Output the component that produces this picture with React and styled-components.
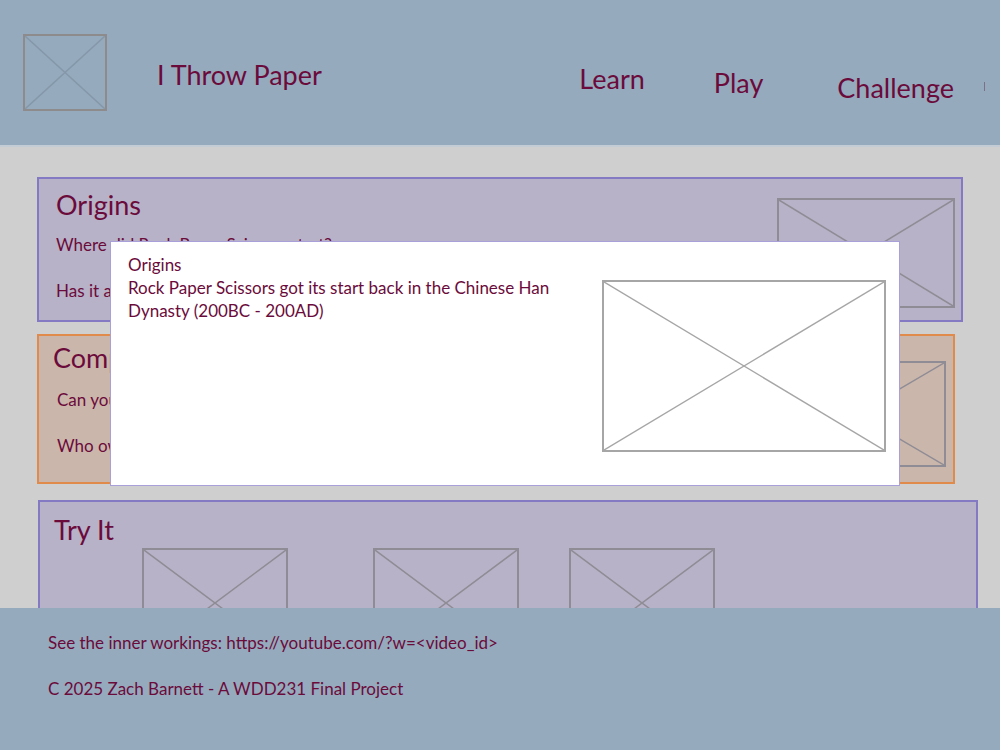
import styled, { createGlobalStyle } from "styled-components";

/* global */

const GlobalStyle = createGlobalStyle`
  html, body {
    margin: 0;
    padding: 0;
  }
  body {
    font-family: Lato, "Liberation Sans", sans-serif;
    color: #6b0b3b;
    background: #d0cfd0;
  }
  * {
    box-sizing: border-box;
  }
  p, h1, h2 {
    margin: 0;
    font-weight: 400;
  }
`;

/* styled components */

const Page = styled.div`
  position: relative;
  width: 1000px;
  height: 750px;
  overflow: hidden;
  display: flex;
  flex-direction: column;
`;

const Header = styled.header`
  flex: none;
  height: 147px;
  background: #95aabd;
  border-bottom: 2px solid #c3ccd5;
  display: flex;
  align-items: flex-start;
`;

const Title = styled.h1`
  margin: 59px 0 0 50px;
  font-size: 27px;
  line-height: 32px;
  white-space: nowrap;
`;

const Nav = styled.nav`
  margin-left: auto;
  display: flex;
  align-items: flex-start;
`;

const NavLink = styled.a`
  margin-top: ${(p) => p.$top}px;
  margin-left: ${(p) => p.$gap}px;
  font-size: 27px;
  line-height: 32px;
  color: inherit;
  text-decoration: none;
  white-space: nowrap;
`;

const Caret = styled.span`
  width: 1px;
  height: 9px;
  margin: 82px 15px 0 30px;
  background: #7d6f86;
`;

const Main = styled.main`
  flex: 1;
  overflow: hidden;
  padding-top: 30px;
  display: flex;
  flex-direction: column;
`;

const Section = styled.section`
  flex: none;
  margin: ${(p) => p.$mt}px 0 0 ${(p) => p.$left}px;
  width: ${(p) => p.$width}px;
  height: ${(p) => p.$height}px;
  border: 2px solid ${(p) => (p.$tone === "tan" ? "#e08b4c" : "#8479c3")};
  background: ${(p) => (p.$tone === "tan" ? "#cbb6ab" : "#b7b2c7")};
  display: flex;
  justify-content: space-between;
  align-items: flex-start;
`;

const SectionBody = styled.div`
  padding: ${(p) => p.$pad};
`;

const Heading = styled.h2`
  font-size: 27px;
  line-height: 32px;
  white-space: nowrap;
`;

const Question = styled.p`
  margin-top: ${(p) => p.$mt}px;
  margin-left: ${(p) => p.$indent || 0}px;
  font-size: 17px;
  line-height: 20px;
  white-space: nowrap;
`;

const Gallery = styled.div`
  display: flex;
  align-items: flex-start;
  margin-top: 2px;
`;

const Frame = styled.div`
  flex: none;
  width: ${(p) => p.$w}px;
  height: ${(p) => p.$h}px;
  margin: ${(p) => p.$m || "0"};
  border: 2px solid ${(p) => p.$edge};
  svg {
    display: block;
    width: 100%;
    height: 100%;
  }
`;

const Footer = styled.footer`
  flex: none;
  height: 142px;
  background: #95aabd;
  padding: 24px 0 0 48px;
`;

const FooterLine = styled.p`
  font-size: 17px;
  line-height: 22px;
  margin-bottom: 24px;
  white-space: nowrap;
`;

const Modal = styled.div`
  position: absolute;
  left: 110px;
  top: 241px;
  width: 790px;
  height: 245px;
  background: #ffffff;
  border: 1px solid #a99fd9;
  padding: 11px 13px 0 17px;
  display: flex;
  justify-content: space-between;
  align-items: flex-start;
`;

const ModalText = styled.div`
  width: 450px;
  font-size: 17px;
  line-height: 23px;
`;

function Placeholder({ w, h, m, edge = "#8f8c95", line }) {
  const stroke = line || edge;
  return (
    <Frame $w={w} $h={h} $m={m} $edge={edge}>
      <svg viewBox="0 0 100 100" preserveAspectRatio="none">
        <line x1="0" y1="0" x2="100" y2="100" stroke={stroke} strokeWidth="1.5" vectorEffect="non-scaling-stroke" />
        <line x1="100" y1="0" x2="0" y2="100" stroke={stroke} strokeWidth="1.5" vectorEffect="non-scaling-stroke" />
      </svg>
    </Frame>
  );
}

function App() {
  return (
    <Page>
      <GlobalStyle />
      <Header>
        <Placeholder w={84} h={77} m="34px 0 0 23px" edge="#8e8b8c" line="#8598a9" />
        <Title>I Throw Paper</Title>
        <Nav>
          <NavLink $top={63} $gap={0}>Learn</NavLink>
          <NavLink $top={67} $gap={69}>Play</NavLink>
          <NavLink $top={72} $gap={74}>Challenge</NavLink>
          <Caret />
        </Nav>
      </Header>

      <Main>
        <Section $tone="purple" $mt={0} $left={37} $width={926} $height={145}>
          <SectionBody $pad="10px 0 0 17px">
            <Heading>Origins</Heading>
            <Question $mt={14}>Where did Rock Paper Scissors start?</Question>
            <Question $mt={26}>Has it always been the same game?</Question>
          </SectionBody>
          <Placeholder w={178} h={110} m="19px 6px 0 0" />
        </Section>

        <Section $tone="tan" $mt={12} $left={37} $width={918} $height={150}>
          <SectionBody $pad="6px 0 0 14px">
            <Heading>Competition</Heading>
            <Question $mt={16} $indent={4}>Can you beat the computer?</Question>
            <Question $mt={26} $indent={4}>Who owns the leaderboard?</Question>
          </SectionBody>
          <Placeholder w={178} h={106} m="25px 7px 0 0" />
        </Section>

        <Section $tone="purple" $mt={16} $left={38} $width={940} $height={150}>
          <SectionBody $pad="12px 0 0 14px">
            <Heading>Try It</Heading>
            <Gallery>
              <Placeholder w={146} h={110} m="0 0 0 88px" />
              <Placeholder w={146} h={110} m="0 0 0 85px" />
              <Placeholder w={146} h={110} m="0 0 0 50px" />
            </Gallery>
          </SectionBody>
        </Section>
      </Main>

      <Footer>
        <FooterLine>See the inner workings: https://youtube.com/?w=&lt;video_id&gt;</FooterLine>
        <FooterLine>C 2025 Zach Barnett - A WDD231 Final Project</FooterLine>
      </Footer>

      <Modal>
        <ModalText>
          <p>Origins</p>
          <p>Rock Paper Scissors got its start back in the Chinese Han Dynasty (200BC - 200AD)</p>
        </ModalText>
        <Placeholder w={284} h={172} m="27px 0 0 0" edge="#a6a6a6" />
      </Modal>
    </Page>
  );
}

export default App;
